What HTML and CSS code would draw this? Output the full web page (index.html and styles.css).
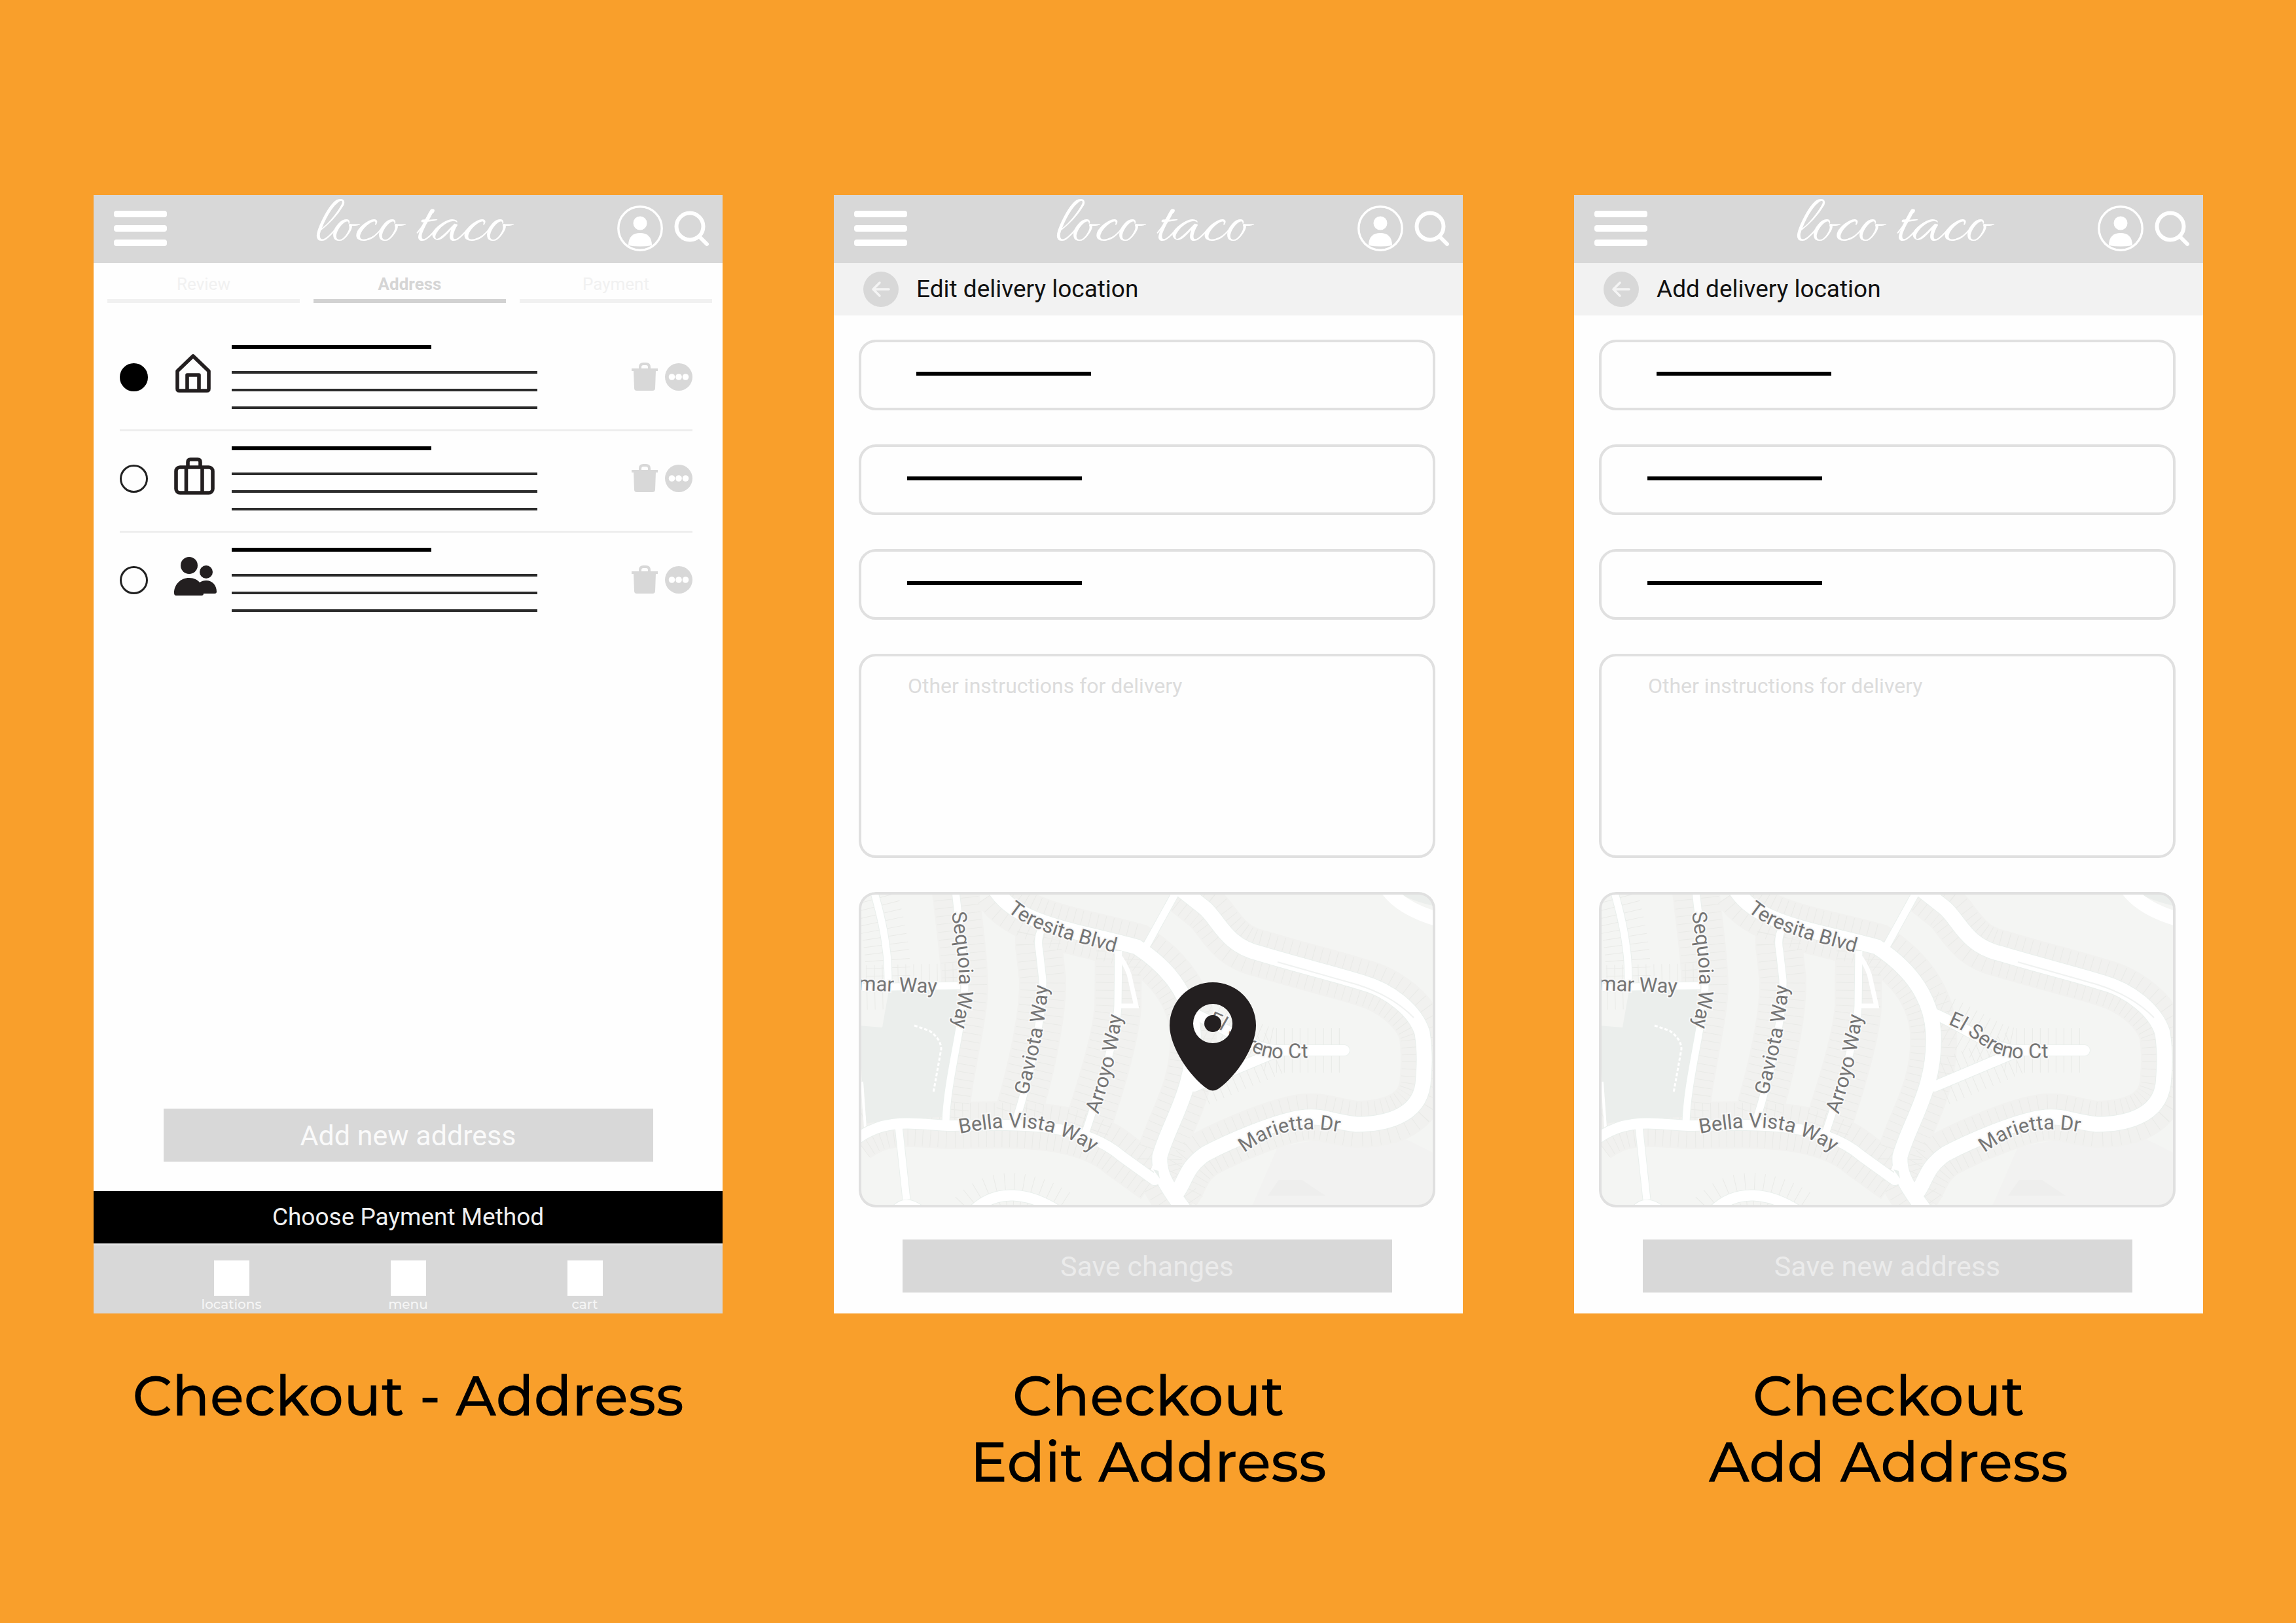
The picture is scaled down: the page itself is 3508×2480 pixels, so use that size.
FILE: index.html
```html
<!DOCTYPE html>
<html lang="en">
<head>
<meta charset="utf-8">
<meta name="viewport" content="width=device-width, initial-scale=1">
<title>loco taco – checkout wireframes</title>
<link rel="stylesheet" href="styles.css">
</head>
<body>

<!-- Shared icons and map geometry -->
<svg class="sprite" aria-hidden="true">
  <symbol id="i-menu" viewBox="0 0 82 56">
    <g fill="#fff"><rect y="1" width="81" height="10" rx="4"/><rect y="23" width="81" height="10" rx="4"/><rect y="45" width="81" height="10" rx="4"/></g>
  </symbol>
  <symbol id="i-user" viewBox="0 0 70 70">
    <circle cx="35" cy="35" r="33.2" fill="none" stroke="#fff" stroke-width="3.4"/>
    <circle cx="35" cy="27" r="10.5" fill="#fff"/>
    <path d="M17 61C17 48 24 42 35 42s18 6 18 19q-18 3-36 0z" fill="#fff"/>
  </symbol>
  <symbol id="i-search" viewBox="0 0 54 56">
    <circle cx="24" cy="25" r="20.500" fill="none" stroke="#fff" stroke-width="6"/>
    <path d="M39 41 50 52" stroke="#fff" stroke-width="6" stroke-linecap="round"/>
  </symbol>
  <symbol id="i-back" viewBox="0 0 54 54">
    <circle cx="27" cy="27" r="27" fill="#d8d8d8"/>
    <path d="M39 27H16M25 17 15 27l10 10" fill="none" stroke="#f4f4f4" stroke-width="3.5" stroke-linecap="round" stroke-linejoin="round"/>
  </symbol>
  <symbol id="i-trash" viewBox="0 0 42 44">
    <path d="M1 9h40v4H1zM4 12h34l-1 27q0 4-4 4H9q-4 0-4-4z" fill="#d8d8d8"/>
    <path d="M14 11V7q0-5 5-5h4q5 0 5 5v4" fill="none" stroke="#d8d8d8" stroke-width="4"/>
  </symbol>
  <symbol id="i-more" viewBox="0 0 42 42">
    <circle cx="21" cy="21" r="21" fill="#d8d8d8"/>
    <g fill="#fff"><circle cx="10.500" cy="21" r="4.800"/><circle cx="21" cy="21" r="4.800"/><circle cx="31.500" cy="21" r="4.800"/></g>
  </symbol>
  <symbol id="i-home" viewBox="0 0 66 72">
    <g fill="none" stroke="#231f20" stroke-width="5.6" stroke-linejoin="round">
      <path d="M29 4 5 27v27q0 3 3 3h42q3 0 3-3V27z"/>
      <path d="M20 57V33h18v24"/>
    </g>
  </symbol>
  <symbol id="i-case" viewBox="0 0 66 72">
    <g fill="none" stroke="#231f20" stroke-width="5.6">
      <rect x="3" y="19" width="56" height="39" rx="6"/>
      <path d="M18.500 58V19M43 58V19M21 19v-8q0-4 4-4h11q4 0 4 4v8"/>
    </g>
  </symbol>
  <symbol id="i-people" viewBox="0 0 66 72">
    <g fill="#231f20">
      <circle cx="23" cy="14" r="13"/>
      <circle cx="49" cy="24" r="10"/>
      <path d="M0 56C0 43 10 33 23 33c7 0 13 3 16 7 3-2 6-3 10-3 9 0 16 7 16 17q0 3-3 3H45q0 3-3 3H3q-3 0-3-4z"/>
    </g>
  </symbol>
  <symbol id="i-pin" viewBox="0 0 132 166">
    <path fill-rule="evenodd" fill="#231f20" d="M66 0a66 66 0 0 1 66 66c0 32-30 78-58 97q-8 5-16 0C30 144 0 98 0 66A66 66 0 0 1 66 0zM66 33a30 30 0 1 0 0 60 30 30 0 1 0 0-60z"/>
    <circle cx="66" cy="63" r="13" fill="#231f20"/>
  </symbol>

  <defs>
    <path id="r-linda" d="M23-2Q38 50 42 87 45 105 45 143M0 146 155 143"/>
    <path id="r-sequoia" d="M148-2C152 40 162 100 162 147 160 200 134 290 133 354"/>
    <path id="r-teresita" d="M210-2C245 50 330 58 425 84 480 120 508 165 511 215 515 300 475 350 460 404 458 435 475 455 497 486"/>
    <path id="r-north" d="M486-2 437 87"/>
    <path id="r-marietta" d="M490-6 528 24C550 42 560 82 613 94 680 114 730 126 771 139 810 150 850 180 861 215 866 250 864 270 862 294 855 345 800 355 760 355 720 350 710 342 683 344 640 348 560 384 530 400 500 420 500 440 487 458"/>
    <path id="r-gaviota" d="M280 56Q272 70 276 90L281 134C282 190 262 280 240 350"/>
    <path id="r-arroyo" d="M397 90 396 174C394 220 366 310 344 375"/>
    <path id="r-bella" d="M-4 378C40 345 80 354 137 357 240 355 340 350 402 404L452 440"/>
    <path id="r-west" d="M61 358 73 470M54 486q18-20 42 0"/>
    <path id="r-south" d="M172 490C210 450 262 460 305 488"/>
    <path id="r-sereno" d="M507 184C550 200 600 240 636 242H742M634 246 513 297"/>
    <path id="t-mar" d="M-1 150 160 156"/>
    <path id="t-sequoia" d="M142 31C150 94 160 134 147 189L140 244"/>
    <path id="t-teresita" d="M227 29C265 61 320 73 430 103"/>
    <path id="t-gaviota" d="M259 311C268 262 288 212 290 122"/>
    <path id="t-arroyo" d="M366 340C384 290 400 230 405 155"/>
    <path id="t-bella" d="M154 369C240 354 300 351 378 413"/>
    <path id="t-marietta" d="M589 399C640 360 690 353 770 375"/>
    <path id="t-sereno" d="M533 202C575 216 593 254 642 254L735 253"/>
  </defs>

  <symbol id="map-base" viewBox="0 0 881 482">
    <rect width="881" height="482" fill="#f4f5f3"/>
    <path d="M600 482 640 390 800 360 881 400V482z" fill="#f2f2f1"/>
    <path d="M642 440H677L713 464H625z" fill="#eeeeed"/>
    <path d="M820 0h61v22q-35-8-61-22z" fill="#ebeeec"/>
    <!-- building plots along the streets -->
    <g fill="none" stroke="#f1f1ef" stroke-width="72">
      <use href="#r-sequoia"/><use href="#r-gaviota"/><use href="#r-arroyo"/><use href="#r-teresita"/><use href="#r-marietta"/><use href="#r-bella"/>
    </g>
    <g fill="none" stroke="#e9eae7" stroke-width="68" stroke-dasharray="1 11">
      <use href="#r-linda"/><use href="#r-sequoia"/><use href="#r-gaviota"/><use href="#r-arroyo"/><use href="#r-teresita"/><use href="#r-marietta"/><use href="#r-bella"/><use href="#r-south"/><use href="#r-sereno"/>
    </g>
    <path d="M46 150 150 147 149 214 126 344 55 347 11 354 5 287 0 204 36 207z" fill="#ebeeec"/>
    <path d="M85 204 108 212Q126 225 126 240L114 307" fill="none" stroke="#fff" stroke-width="3" stroke-dasharray="5 3"/>
    <path d="M5 290 10 360" fill="none" stroke="#fff" stroke-width="4"/>
    <!-- road edges -->
    <g fill="none" stroke="#e9efec">
      <g stroke-width="13"><use href="#r-linda"/><use href="#r-sequoia"/><use href="#r-north"/><use href="#r-gaviota"/><use href="#r-arroyo"/><use href="#r-west"/></g>
      <g stroke-width="18" stroke-linecap="round"><use href="#r-bella"/><use href="#r-south"/><use href="#r-sereno"/></g>
      <g stroke-width="25"><use href="#r-teresita"/><use href="#r-marietta"/></g>
    </g>
    <!-- road surfaces -->
    <g fill="none" stroke="#fff">
      <g stroke-width="11"><use href="#r-linda"/><use href="#r-sequoia"/><use href="#r-north"/><use href="#r-gaviota"/><use href="#r-arroyo"/><use href="#r-west"/></g>
      <g stroke-width="16" stroke-linecap="round"><use href="#r-bella"/><use href="#r-south"/><use href="#r-sereno"/></g>
      <g stroke-width="23"><use href="#r-teresita"/><use href="#r-marietta"/></g>
      <path d="M400 100Q413 120 415 134L424 174H397" stroke-width="7"/>
      <path d="M448 420 470 428" stroke-width="10"/>
      <path d="M808-4Q830 26 886 42" stroke-width="22"/>
    </g>
    <path d="M640 107 760 141Q815 158 848 192" fill="none" stroke="#f0f2f1" stroke-width="2"/>
    <path d="M450 424 458 426 460 438z" fill="#e9efec"/>
  </symbol>
</svg>

<main class="board">

  <figure class="frame">
    <section class="phone" aria-label="Checkout, address list">
      <header class="topbar">
        <button class="icon-btn" aria-label="Menu"><svg class="ic-menu"><use href="#i-menu"/></svg></button>
        <a class="logo" href="#">loco taco</a>
        <div class="topbar-tools">
          <button class="icon-btn" aria-label="Account"><svg class="ic-user"><use href="#i-user"/></svg></button>
          <button class="icon-btn" aria-label="Search"><svg class="ic-search"><use href="#i-search"/></svg></button>
        </div>
      </header>
      <nav class="steps" aria-label="Checkout steps">
        <a class="step" href="#">Review</a>
        <a class="step is-current" href="#" aria-current="step">Address</a>
        <a class="step" href="#">Payment</a>
      </nav>
      <ul class="addresses">
        <li class="address">
          <input class="radio" type="radio" name="address" aria-label="Home address" checked>
          <svg class="ic-kind"><use href="#i-home"/></svg>
          <div class="lines"><i class="line-title"></i><i></i><i></i><i></i></div>
          <button class="icon-btn" aria-label="Delete home address"><svg class="ic-trash"><use href="#i-trash"/></svg></button>
          <button class="icon-btn" aria-label="More for home address"><svg class="ic-more"><use href="#i-more"/></svg></button>
        </li>
        <li class="address">
          <input class="radio" type="radio" name="address" aria-label="Work address">
          <svg class="ic-kind"><use href="#i-case"/></svg>
          <div class="lines"><i class="line-title"></i><i></i><i></i><i></i></div>
          <button class="icon-btn" aria-label="Delete work address"><svg class="ic-trash"><use href="#i-trash"/></svg></button>
          <button class="icon-btn" aria-label="More for work address"><svg class="ic-more"><use href="#i-more"/></svg></button>
        </li>
        <li class="address">
          <input class="radio" type="radio" name="address" aria-label="Friends address">
          <svg class="ic-kind"><use href="#i-people"/></svg>
          <div class="lines"><i class="line-title"></i><i></i><i></i><i></i></div>
          <button class="icon-btn" aria-label="Delete friends address"><svg class="ic-trash"><use href="#i-trash"/></svg></button>
          <button class="icon-btn" aria-label="More for friends address"><svg class="ic-more"><use href="#i-more"/></svg></button>
        </li>
      </ul>
      <button class="btn btn-add">Add new address</button>
      <button class="btn-next">Choose Payment Method</button>
      <nav class="tabbar" aria-label="Main">
        <a class="tab" href="#"><span class="tab-box"></span>locations</a>
        <a class="tab" href="#"><span class="tab-box"></span>menu</a>
        <a class="tab" href="#"><span class="tab-box"></span>cart</a>
      </nav>
    </section>
    <figcaption class="caption">Checkout - Address</figcaption>
  </figure>

  <figure class="frame">
    <section class="phone" aria-label="Checkout, edit address">
      <header class="topbar">
        <button class="icon-btn" aria-label="Menu"><svg class="ic-menu"><use href="#i-menu"/></svg></button>
        <a class="logo" href="#">loco taco</a>
        <div class="topbar-tools">
          <button class="icon-btn" aria-label="Account"><svg class="ic-user"><use href="#i-user"/></svg></button>
          <button class="icon-btn" aria-label="Search"><svg class="ic-search"><use href="#i-search"/></svg></button>
        </div>
      </header>
      <div class="subbar">
        <button class="icon-btn" aria-label="Back"><svg class="ic-back"><use href="#i-back"/></svg></button>
        <h2 class="subbar-title">Edit delivery location</h2>
      </div>
      <form class="form">
        <input class="field field-name" type="text" aria-label="Name">
        <input class="field" type="text" aria-label="Street">
        <input class="field" type="text" aria-label="City">
        <textarea class="field field-notes" aria-label="Other instructions for delivery" placeholder="Other instructions for delivery"></textarea>
        <svg class="map" viewBox="0 0 881 482" role="img" aria-label="Map with the delivery pin">
          <use href="#map-base" width="881" height="482"/>
          <g class="map-text">
            <text><textPath href="#t-mar">mar Way</textPath></text>
            <text><textPath href="#t-sequoia">Sequoia Way</textPath></text>
            <text><textPath href="#t-teresita">Teresita Blvd</textPath></text>
            <text><textPath href="#t-gaviota">Gaviota Way</textPath></text>
            <text><textPath href="#t-arroyo">Arroyo Way</textPath></text>
            <text><textPath href="#t-bella">Bella Vista Way</textPath></text>
            <text><textPath href="#t-marietta">Marietta Dr</textPath></text>
            <text><textPath href="#t-sereno">El Sereno Ct</textPath></text>
          </g>
          <use href="#i-pin" x="475" y="138" width="132" height="166"/>
          <rect class="map-edge" x="2" y="2" width="877" height="478" rx="24"/>
        </svg>
        <button class="btn btn-save" type="button">Save changes</button>
      </form>
    </section>
    <figcaption class="caption">Checkout<br>Edit Address</figcaption>
  </figure>

  <figure class="frame">
    <section class="phone" aria-label="Checkout, add address">
      <header class="topbar">
        <button class="icon-btn" aria-label="Menu"><svg class="ic-menu"><use href="#i-menu"/></svg></button>
        <a class="logo" href="#">loco taco</a>
        <div class="topbar-tools">
          <button class="icon-btn" aria-label="Account"><svg class="ic-user"><use href="#i-user"/></svg></button>
          <button class="icon-btn" aria-label="Search"><svg class="ic-search"><use href="#i-search"/></svg></button>
        </div>
      </header>
      <div class="subbar">
        <button class="icon-btn" aria-label="Back"><svg class="ic-back"><use href="#i-back"/></svg></button>
        <h2 class="subbar-title">Add delivery location</h2>
      </div>
      <form class="form">
        <input class="field field-name" type="text" aria-label="Name">
        <input class="field" type="text" aria-label="Street">
        <input class="field" type="text" aria-label="City">
        <textarea class="field field-notes" aria-label="Other instructions for delivery" placeholder="Other instructions for delivery"></textarea>
        <svg class="map" viewBox="0 0 881 482" role="img" aria-label="Map">
          <use href="#map-base" width="881" height="482"/>
          <g class="map-text">
            <text><textPath href="#t-mar">mar Way</textPath></text>
            <text><textPath href="#t-sequoia">Sequoia Way</textPath></text>
            <text><textPath href="#t-teresita">Teresita Blvd</textPath></text>
            <text><textPath href="#t-gaviota">Gaviota Way</textPath></text>
            <text><textPath href="#t-arroyo">Arroyo Way</textPath></text>
            <text><textPath href="#t-bella">Bella Vista Way</textPath></text>
            <text><textPath href="#t-marietta">Marietta Dr</textPath></text>
            <text><textPath href="#t-sereno">El Sereno Ct</textPath></text>
          </g>
          <rect class="map-edge" x="2" y="2" width="877" height="478" rx="24"/>
        </svg>
        <button class="btn btn-save" type="button">Save new address</button>
      </form>
    </section>
    <figcaption class="caption">Checkout<br>Add Address</figcaption>
  </figure>

</main>
</body>
</html>
```

FILE: styles.css
```css
:root {
  --orange: #f99f2b;
  --grey: #d8d8d8;
  --paper: #fefefe;
  --border: #e0e0e0;
}

* { box-sizing: border-box; }

body {
  margin: 0;
  min-height: 100vh;
  background: var(--orange);
  font-family: Roboto, "Liberation Sans", sans-serif;
  color: #000;
}

button, input, textarea {
  font: inherit;
  color: inherit;
  margin: 0;
}

button {
  border: 0;
  padding: 0;
  background: none;
  cursor: pointer;
}

a {
  color: inherit;
  text-decoration: none;
}

svg { display: block; }

.sprite {
  position: absolute;
  width: 0;
  height: 0;
}

/* Board: three captioned phone frames */
.board {
  display: grid;
  grid-template-columns: repeat(3, minmax(0, 1fr));
  grid-template-rows: auto auto;
  column-gap: 170px;
  padding: 298px 142px 0 143px;
}

.frame {
  display: grid;
  grid-row: span 2;
  grid-template-rows: subgrid;
  margin: 0;
}

.phone {
  display: flex;
  flex-direction: column;
  background: var(--paper);
}

.caption {
  padding-top: 75px;
  font-family: Montserrat, Inter, "Open Sans", sans-serif;
  font-weight: 500;
  font-size: 85px;
  line-height: 101px;
  text-align: center;
}

/* Top bar */
.topbar {
  display: grid;
  grid-template-columns: 1fr auto 1fr;
  align-items: center;
  height: 104px;
  padding: 0 20px 2px 31px;
  background: var(--grey);
}

.topbar-tools {
  display: flex;
  align-items: center;
  justify-content: flex-end;
  gap: 17px;
}

.icon-btn {
  display: block;
  justify-self: start;
}

.ic-menu { width: 82px; height: 56px; }
.ic-user { width: 70px; height: 70px; }
.ic-search { width: 54px; height: 56px; }
.ic-back { width: 54px; height: 54px; }
.ic-kind { width: 66px; height: 72px; }
.ic-trash { width: 42px; height: 44px; }
.ic-more { width: 42px; height: 42px; }

.logo {
  font-family: Allura, "Alex Brush", Lato, sans-serif;
  font-weight: 400;
  font-size: 106px;
  line-height: 100px;
  color: #fff;
}

/* Checkout steps */
.steps {
  display: grid;
  grid-template-columns: repeat(3, 1fr);
  gap: 21px;
  padding: 14px 16px 0 21px;
}

.step {
  padding-bottom: 5px;
  border-bottom: 6px solid #f1f1f1;
  font-size: 26px;
  line-height: 36px;
  text-align: center;
  color: #f1f1f1;
}

.step.is-current {
  border-color: #d2d2d2;
  font-weight: 700;
  color: #d5d5d5;
}

/* Saved addresses */
.addresses {
  flex: 1;
  margin: 0;
  padding: 41px 46px 0 40px;
  list-style: none;
}

.address {
  display: grid;
  grid-template-columns: 43px 66px 1fr auto auto;
  align-items: center;
  height: 155px;
  padding-bottom: 8px;
  border-bottom: 3px solid #eee;
}

.address:last-child { border-color: transparent; }

.radio {
  appearance: none;
  width: 43px;
  height: 43px;
  border: 3px solid #222;
  border-radius: 50%;
}

.radio:checked {
  border-color: #000;
  background: #000;
}

.address .ic-kind { margin-left: 40px; }

.lines {
  display: flex;
  flex-direction: column;
  gap: 23px;
  margin-left: 62px;
}

.lines i {
  width: 467px;
  height: 4px;
  background: #2b2b2b;
}

.lines .line-title {
  width: 305px;
  height: 6px;
  margin-bottom: 11px;
  background: #000;
}

.address .ic-more { margin-left: 10px; }

/* Buttons */
.btn {
  align-self: center;
  width: 748px;
  max-width: 100%;
  height: 81px;
  background: var(--grey);
  font-size: 43px;
  line-height: 48px;
  text-align: center;
}

.btn-add {
  margin-bottom: 45px;
  color: #fafafa;
}

.btn-save {
  margin-top: -3px;
  color: #ebebeb;
}

.btn-next {
  height: 80px;
  background: #000;
  font-size: 37px;
  line-height: 44px;
  color: #efefef;
}

/* Bottom tab bar */
.tabbar {
  display: flex;
  justify-content: center;
  gap: 150px;
  height: 107px;
  padding-top: 23px;
  border-top: 3px solid #e6e6e6;
  background: var(--grey);
}

.tab {
  display: flex;
  flex-direction: column;
  align-items: center;
  width: 120px;
  font-family: Montserrat, "Open Sans", sans-serif;
  font-weight: 500;
  font-size: 20px;
  line-height: 27px;
  color: #f6f6f6;
}

.tab-box {
  width: 54px;
  height: 54px;
  background: #fff;
}

/* Title bar under the top bar */
.subbar {
  display: flex;
  align-items: center;
  gap: 27px;
  height: 80px;
  padding-left: 45px;
  background: #f2f2f2;
}

.subbar-title {
  margin: 0;
  font-weight: 400;
  font-size: 37px;
  line-height: 44px;
  color: #111;
}

/* Delivery form */
.form {
  display: flex;
  flex-direction: column;
  gap: 52px;
  padding: 37px 42px 32px 38px;
}

.field {
  display: block;
  width: 100%;
  height: 108px;
  padding: 0 70px;
  border: 4px solid var(--border);
  border-radius: 26px;
  outline: 0;
  background: linear-gradient(#000, #000) 70px 45px / 267px 6px no-repeat var(--paper);
  font-size: 32px;
}

.field-name { background-position-x: 84px; }

.field-notes {
  height: 312px;
  padding: 25px 71px;
  background: var(--paper);
  line-height: 40px;
  resize: none;
}

.field-notes::placeholder {
  color: #dcdcdc;
  opacity: 1;
}

.map {
  width: 100%;
  height: auto;
  border-radius: 26px;
}

.map-edge {
  fill: none;
  stroke: var(--border);
  stroke-width: 4px;
}

.map-text {
  fill: #757575;
  stroke: #f8f8f8;
  stroke-width: 4px;
  paint-order: stroke;
  font-family: Roboto, sans-serif;
  font-size: 31px;
}
```
